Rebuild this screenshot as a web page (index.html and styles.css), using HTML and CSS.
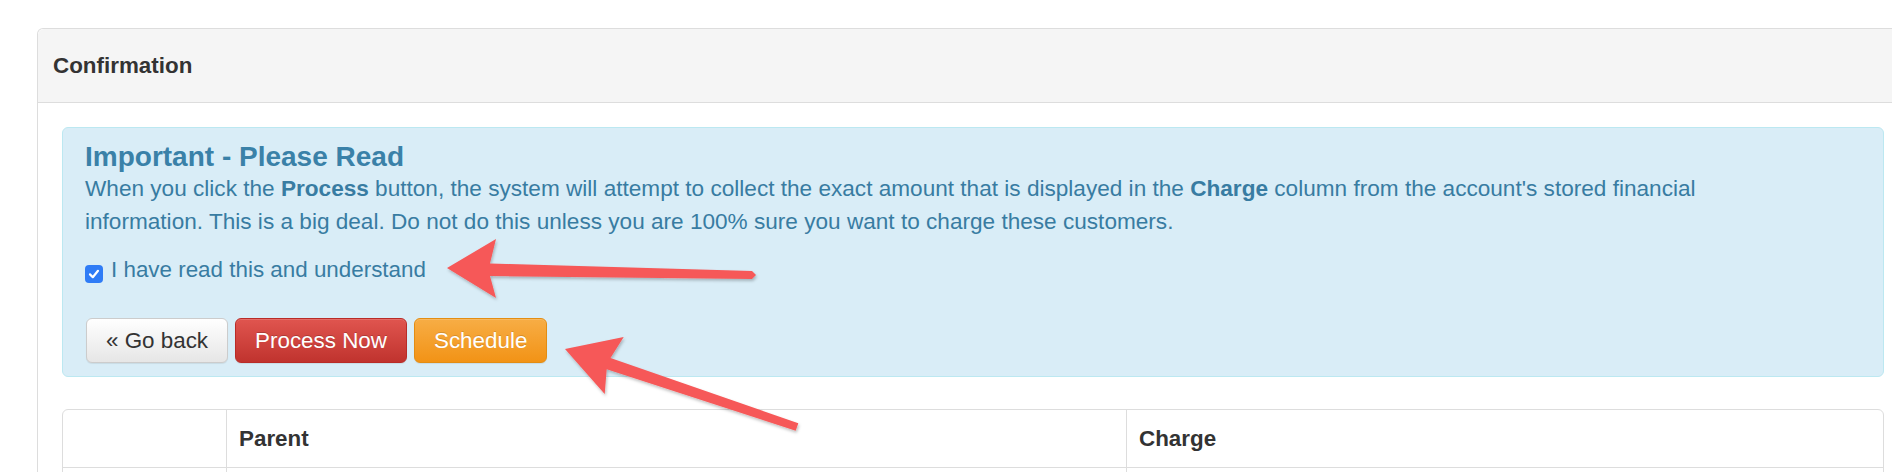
FILE: index.html
```html
<!DOCTYPE html>
<html lang="en">
<head>
    <meta charset="UTF-8">
    <meta name="viewport" content="width=device-width, initial-scale=1.0">
    <title>Confirmation</title>
    <link rel="stylesheet" href="styles.css">
</head>
<body>
    <div class="page">
        <div class="panel">
            <div class="panel-heading">
                <h3 class="panel-title">Confirmation</h3>
            </div>
            <div class="panel-body">
                <div class="alert">
                    <h4>Important - Please Read</h4>
                    <p>When you click the <strong>Process</strong> button, the system will attempt to collect the exact amount that is displayed in the <strong>Charge</strong> column from the account's stored financial<br>information. This is a big deal. Do not do this unless you are 100% sure you want to charge these customers.</p>

                    <label class="confirm">
                        <span class="check-box">
                            <svg width="12" height="12" viewBox="0 0 12 12"><path d="M2 6.4 L4.8 9.2 L10 2.8" fill="none" stroke="#fff" stroke-width="2.2" stroke-linecap="round" stroke-linejoin="round"/></svg>
                        </span>
                        <span>I have read this and understand</span>
                    </label>

                    <div class="actions">
                        <button class="btn btn-default">&laquo; Go back</button>
                        <button class="btn btn-danger">Process Now</button>
                        <button class="btn btn-warning">Schedule</button>
                    </div>
                </div>

                <div class="table">
                    <div class="cell head"></div>
                    <div class="cell head">Parent</div>
                    <div class="cell head">Charge</div>
                    <div class="cell"></div>
                    <div class="cell"></div>
                    <div class="cell"></div>
                </div>
            </div>
        </div>
    </div>

    <!-- annotation arrows drawn over the screenshot -->
    <svg class="annotations" width="1892" height="472" viewBox="0 0 1892 472">
        <defs>
            <filter id="shadow" x="-10%" y="-10%" width="120%" height="130%">
                <feDropShadow dx="1" dy="2" stdDeviation="1.5" flood-color="#000" flood-opacity="0.25"/>
            </filter>
        </defs>
        <polygon class="arrow" filter="url(#shadow)"
            points="447,268 496,239 490,263.5 752,271 756,275 752,279 490,276 496,298"/>
        <polygon class="arrow" filter="url(#shadow)"
            points="565,349 623.7,337 610.5,357.9 798.3,423.2 795.7,430.8 606.7,369.3 604.7,394"/>
    </svg>
</body>
</html>
```

FILE: styles.css
```css
html, body {
    margin: 0;
    overflow: hidden;
}
body {
    position: relative;
    height: 472px;
    font-family: "Liberation Sans", Arial, sans-serif;
    font-size: 22.4px;
    color: #333;
    background-color: #fff;
}
.page {
    padding: 28px 0 0 37px;
}
.panel {
    width: 1872px;
    box-sizing: border-box;
    border: 1px solid #ddd;
    border-bottom: none;
    border-radius: 6px 6px 0 0;
}
.panel-heading {
    display: flex;
    align-items: center;
    height: 73px;
    padding: 0 15px;
    background-color: #f5f5f5;
    border-bottom: 1px solid #ddd;
    border-radius: 6px 6px 0 0;
}
.panel-title {
    margin: 0;
    font-size: 22.4px;
    font-weight: bold;
    color: #333;
}
.panel-body {
    padding: 24px 24px 0;
}
.alert {
    padding: 13px 23px 13px 22px;
    background-color: #d9edf7;
    border: 1px solid #bce8f1;
    border-radius: 6px;
    color: #387ca2;
}
.alert h4 {
    margin: 0;
    font-size: 28px;
    line-height: 31px;
    font-weight: bold;
    color: #3a81a8;
}
.alert p {
    margin: 0 0 15px;
    font-size: 22.6px;
    line-height: 33px;
}
.confirm {
    display: flex;
    align-items: flex-start;
    gap: 8px;
    line-height: 33px;
}
.check-box {
    display: inline-flex;
    align-items: center;
    justify-content: center;
    width: 18px;
    height: 18px;
    margin-top: 12px;
    background-color: #2f7cf6;
    border-radius: 4px;
}
.actions {
    display: flex;
    gap: 7px;
    margin-top: 32px;
    padding-left: 1px;
}
.btn {
    font-family: inherit;
    font-size: 22.4px;
    line-height: 25px;
    padding: 9px 19px;
    border: 1px solid transparent;
    border-radius: 6px;
    box-shadow: inset 0 1px 0 rgba(255, 255, 255, 0.15), 0 1px 1px rgba(0, 0, 0, 0.075);
    cursor: pointer;
}
.btn-default {
    color: #333;
    background-image: linear-gradient(to bottom, #fff 0, #e6e6e6 100%);
    border-color: #ccc;
}
.btn-danger {
    color: #fff;
    background-image: linear-gradient(to bottom, #e0554f 0, #c0332e 100%);
    border-color: #b92c28;
    text-shadow: 0 -1px 0 rgba(0, 0, 0, 0.2);
}
.btn-warning {
    color: #fff;
    background-image: linear-gradient(to bottom, #f7ad45 0, #f29316 100%);
    border-color: #e38d13;
    text-shadow: 0 -1px 0 rgba(0, 0, 0, 0.15);
}
.table {
    display: grid;
    grid-template-columns: 163px 900px 1fr;
    margin-top: 32px;
    border: 1px solid #ddd;
    border-radius: 6px;
}
.cell {
    padding: 12.5px 12px;
    line-height: 32px;
    min-height: 32px;
    border-left: 1px solid #ddd;
}
.cell:nth-child(3n+1) {
    border-left: none;
}
.cell.head {
    font-weight: bold;
    color: #333;
    border-bottom: 1px solid #ddd;
}
.annotations {
    position: absolute;
    top: 0;
    left: 0;
    pointer-events: none;
}
.arrow {
    fill: #f65858;
}
```
